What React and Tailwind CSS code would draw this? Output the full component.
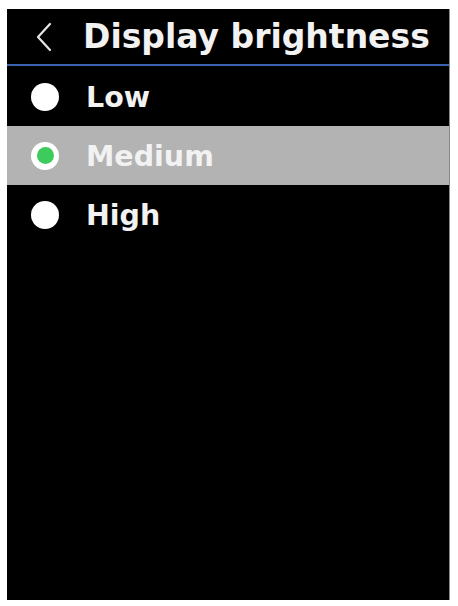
export default function App() {
  const items = [
    { label: "Low", selected: false },
    { label: "Medium", selected: true },
    { label: "High", selected: false },
  ];
  return (
    <div className="w-[458px] h-[606px] bg-white pt-[9px] pl-[7px]" style={{ fontFamily: '"DejaVu Sans", sans-serif' }}>
      <div className="w-[443px] h-[591px] bg-black border-r border-[#8a8a8a] flex flex-col">
        <div className="h-[55px] flex items-center">
          <svg className="ml-[28px] w-[18px] h-[30px]" viewBox="0 0 18 30" fill="none">
            <path d="M15 2 L3 15 L15 28" stroke="#e6e6e6" strokeWidth="2.2" strokeLinecap="round" strokeLinejoin="round" />
          </svg>
          <span className="ml-[30px] text-[33px] font-bold text-[#f2f2f2] leading-none">Display brightness</span>
        </div>
        <div className="h-[2px] bg-[#3b63b0]" />
        <div className="mt-[1px] flex flex-col">
          {items.map((it) => (
            <div key={it.label} className={`h-[59px] flex items-center ${it.selected ? "bg-[#b3b3b3]" : ""}`}>
              {it.selected ? (
                <div className="ml-[24px] w-[28px] h-[28px] rounded-full bg-white flex items-center justify-center">
                  <div className="w-[17px] h-[17px] rounded-full bg-[#3dcb5b]" />
                </div>
              ) : (
                <div className="ml-[24px] w-[28px] h-[28px] rounded-full bg-white" />
              )}
              <span className="ml-[27px] mt-[3px] text-[28.5px] font-bold text-[#f2f2f2] leading-none">{it.label}</span>
            </div>
          ))}
        </div>
      </div>
    </div>
  );
}
